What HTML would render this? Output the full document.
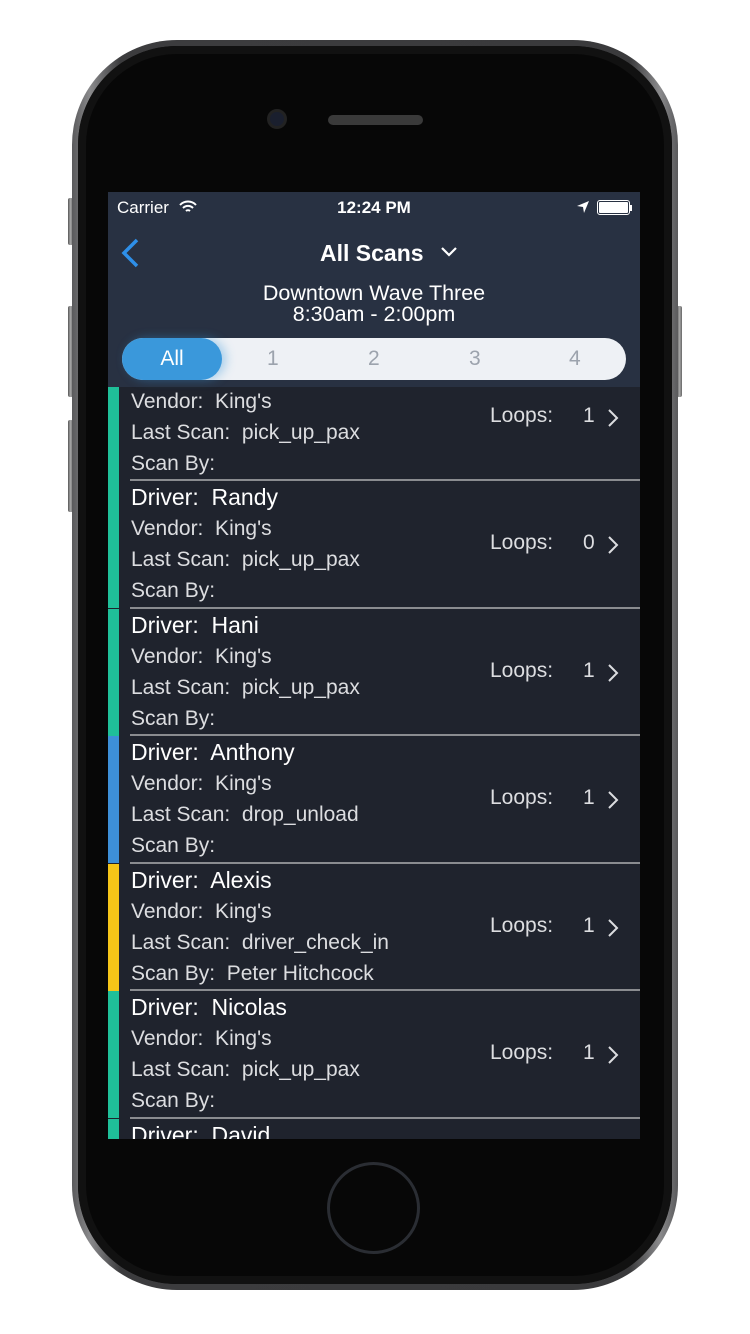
<!DOCTYPE html>
<html><head><meta charset="utf-8"><style>
*{margin:0;padding:0;box-sizing:border-box}
body{width:750px;height:1334px;background:#fff;position:relative;overflow:hidden;font-family:"Liberation Sans",sans-serif}
.btn{position:absolute;background:linear-gradient(90deg,#555,#aaa,#666);border-radius:2px}
.phone{position:absolute;left:72px;top:40px;width:606px;height:1250px;border-radius:105px;background:linear-gradient(90deg,#5a5a5c,#8a8a8c 3%,#3c3c3e 8%,#3a3a3c 92%,#8a8a8c 97%,#5a5a5c)}
.inner{position:absolute;left:6px;top:6px;right:6px;bottom:6px;border-radius:99px;background:#070707;box-shadow:inset 0 0 0 8px #111}
.screen{position:absolute;left:108px;top:192px;width:532px;height:947px;background:#1f232d;overflow:hidden}
.head{position:absolute;left:0;top:0;width:532px;height:195px;background:#283142;z-index:2}
.t{position:absolute;color:#fff;white-space:nowrap}
.row{position:absolute;left:0;width:532px;height:127.5px}
.bar{position:absolute;left:0;top:0;width:11px;height:127px}
.sep{position:absolute;left:22px;right:0;bottom:0;height:2px;background:#8a8c90}
.l{position:absolute;left:23px;font-size:21px;color:#dcdde0;white-space:nowrap}
.d{color:#fff;font-size:23px}
.lp{position:absolute;left:382px;top:50px;font-size:21px;color:#dcdde0}
.n{position:absolute;left:475px;top:50px;font-size:21px;color:#dcdde0}
.ch{position:absolute;left:498px;top:54px}
</style></head><body>
<div class="btn" style="left:68px;top:198px;width:5px;height:47px"></div>
<div class="btn" style="left:68px;top:306px;width:5px;height:91px"></div>
<div class="btn" style="left:68px;top:420px;width:5px;height:92px"></div>
<div class="btn" style="left:677px;top:306px;width:5px;height:91px"></div>
<div class="phone"><div class="inner"></div></div>
<div style="position:absolute;left:267px;top:109px;width:20px;height:20px;border-radius:50%;background:#1a1f2e;border:3px solid #222"></div>
<div style="position:absolute;left:328px;top:115px;width:95px;height:10px;border-radius:5px;background:#3a3a3a"></div>
<div style="position:absolute;left:327px;top:1162px;width:93px;height:92px;border-radius:50%;border:3px solid #2a2d33"></div>
<div class="screen">
<div class="head">
 <div class="t" style="left:9px;top:6px;font-size:17px">Carrier</div>
 <svg style="position:absolute;left:71px;top:8px" width="18" height="14" viewBox="0 0 18 14"><path d="M1 5a11 11 0 0 1 16 0M4 8a7 7 0 0 1 10 0M7 11a3 3 0 0 1 4 0" stroke="#fff" stroke-width="2" fill="none"/></svg>
 <div class="t" style="left:0;width:532px;text-align:center;top:6px;font-size:17px;font-weight:bold">12:24 PM</div>
 <svg style="position:absolute;left:468px;top:8px" width="14" height="14" viewBox="0 0 14 14"><path d="M13 1L1 6l6 1 1 6z" fill="#fff"/></svg>
 <div style="position:absolute;left:489px;top:8px;width:33px;height:15px;border:1.5px solid #fff;border-radius:3px;padding:1px"><div style="background:#fff;width:100%;height:100%;border-radius:1px"></div></div>
 <div style="position:absolute;left:522px;top:13px;width:2px;height:6px;background:#fff"></div>
 <svg style="position:absolute;left:12px;top:45px" width="20" height="32" viewBox="0 0 20 32"><path d="M17 3L4 16l13 13" stroke="#2e8fe8" stroke-width="3.5" fill="none"/></svg>
 <div class="t" style="left:212px;top:48px;font-size:23px;font-weight:bold">All Scans</div>
 <svg style="position:absolute;left:332px;top:54px" width="18" height="12" viewBox="0 0 18 12"><path d="M2 2l7 7 7-7" stroke="#fff" stroke-width="2.2" fill="none"/></svg>
 <div class="t" style="left:0;width:532px;text-align:center;top:91px;font-size:21.5px;line-height:21px">Downtown Wave Three<br>8:30am - 2:00pm</div>
 <div style="position:absolute;left:14px;top:146px;width:504px;height:42px;border-radius:21px;background:#eef1f5">
  <div style="position:absolute;left:0;top:0;width:100px;height:42px;border-radius:21px;background:#3a98db;box-shadow:4px 0 10px rgba(58,152,219,.4);color:#fff;font-size:21px;text-align:center;line-height:42px">All</div>
  <div style="position:absolute;left:145px;top:0;line-height:42px;font-size:21px;color:#9ca3ad">1</div>
  <div style="position:absolute;left:246px;top:0;line-height:42px;font-size:21px;color:#9ca3ad">2</div>
  <div style="position:absolute;left:347px;top:0;line-height:42px;font-size:21px;color:#9ca3ad">3</div>
  <div style="position:absolute;left:447px;top:0;line-height:42px;font-size:21px;color:#9ca3ad">4</div>
 </div>
</div>
<div id="list"></div>
</div>
<script>
var rows=[["","King's","pick_up_pax","",1,"#1fbf99"],["Randy","King's","pick_up_pax","",0,"#1fbf99"],["Hani","King's","pick_up_pax","",1,"#1fbf99"],["Anthony","King's","drop_unload","",1,"#3d8fd8"],["Alexis","King's","driver_check_in","Peter Hitchcock",1,"#f5c518"],["Nicolas","King's","pick_up_pax","",1,"#1fbf99"],["David","King's","pick_up_pax","",1,"#1fbf99"]];
var h="";rows.forEach(function(r,i){var top=161.5+127.5*i;
h+='<div class="row" style="top:'+top+'px"><div class="bar" style="background:'+r[5]+'"></div>'+
'<div class="l d" style="top:3px">Driver:&nbsp; '+r[0]+'</div>'+
'<div class="l" style="top:36px">Vendor:&nbsp; '+r[1]+'</div>'+
'<div class="l" style="top:67px">Last Scan:&nbsp; '+r[2]+'</div>'+
'<div class="l" style="top:98px">Scan By:&nbsp; '+r[3]+'</div>'+
'<div class="lp">Loops:</div><div class="n">'+r[4]+'</div>'+
'<svg class="ch" width="14" height="20" viewBox="0 0 14 20"><path d="M3 2l8 8-8 8" stroke="#dcdde0" stroke-width="2" fill="none"/></svg>'+
'<div class="sep"></div></div>';});
document.getElementById("list").innerHTML=h;
</script>
</body></html>
